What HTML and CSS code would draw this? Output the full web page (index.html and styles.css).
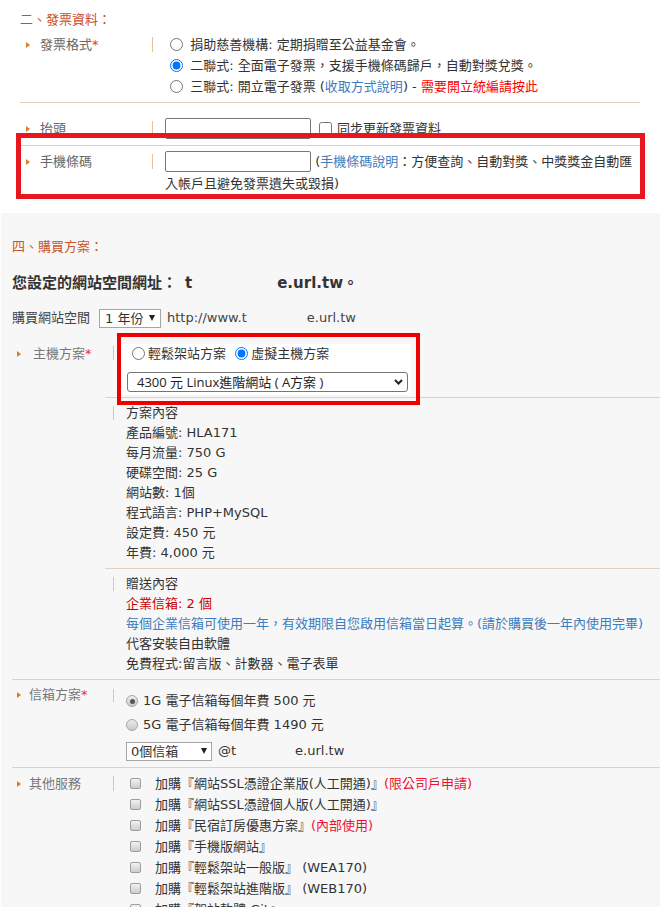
FILE: index.html
```html
<!DOCTYPE html>
<html lang="zh-Hant">
  <head>
    <meta charset="UTF-8" />
    <title>購買方案</title>
    <link rel="stylesheet" href="styles.css">
  </head>
  <body>
    <div class="invoice">
      <div class="sec-title">二、發票資料：</div>

      <div class="row row-format">
        <div class="label"><span class="tri"></span>發票格式<em class="req">*</em></div>
        <div class="bar"></div>
        <div class="field">
          <label class="opt"><input type="radio" name="inv"> 捐助慈善機構: 定期捐贈至公益基金會。</label>
          <label class="opt"><input type="radio" name="inv" checked> 二聯式: 全面電子發票，支援手機條碼歸戶，自動對獎兌獎。</label>
          <label class="opt"><input type="radio" name="inv"> 三聯式: 開立電子發票 (<a class="link">收取方式說明</a>) - <a class="warn">需要開立統編請按此</a></label>
        </div>
      </div>

      <div class="row row-title">
        <div class="label"><span class="tri"></span>抬頭</div>
        <div class="bar"></div>
        <div class="field field-title">
          <input class="text-input" type="text">
          <input class="sync" type="checkbox">
          <span>同步更新發票資料</span>
        </div>
      </div>

      <div class="row row-phone">
        <div class="label"><span class="tri"></span>手機條碼</div>
        <div class="bar"></div>
        <div class="field field-phone">
          <input class="text-input" type="text"> (<a class="link">手機條碼說明</a>：方便查詢、自動對獎、中獎獎金自動匯入帳戶且避免發票遺失或毀損)
        </div>
      </div>
    </div>

    <div class="plan">
      <div class="sec-title">四、購買方案：</div>

      <div class="site-url">您設定的網站空間網址：<span class="host">t<span class="blank blank-head"></span>e.url.tw</span>。</div>

      <div class="buy">
        購買網站空間
        <span class="old-select year">1 年份</span>
        <span class="www">http://www.t<span class="blank blank-buy"></span>e.url.tw</span>
      </div>

      <div class="row row-host">
        <div class="label label-host"><span class="tri"></span>主機方案<em class="req">*</em></div>
        <div class="subs">
          <div class="sub sub-pick">
            <div class="bar"></div>
            <div class="pick-box">
              <div class="pick-radios">
                <label><input type="radio" name="host">輕鬆架站方案</label>
                <label><input type="radio" name="host" checked>虛擬主機方案</label>
              </div>
              <div class="wide-select">
                <span>4300 元 Linux進階網站 ( A方案 )</span>
                <svg width="9" height="6" viewBox="0 0 9 6"><path d="M1 1l3.5 3.5L8 1" fill="none" stroke="#222" stroke-width="2"/></svg>
              </div>
            </div>
          </div>

          <div class="sub">
            <div class="bar"></div>
            <div class="content">
              <div>方案內容</div>
              <div>產品編號: HLA171</div>
              <div>每月流量: 750 G</div>
              <div>硬碟空間: 25 G</div>
              <div>網站數: 1個</div>
              <div>程式語言: PHP+MySQL</div>
              <div>設定費: 450 元</div>
              <div>年費: 4,000 元</div>
            </div>
          </div>

          <div class="sub">
            <div class="bar"></div>
            <div class="content">
              <div>贈送內容</div>
              <div class="red">企業信箱: 2 個</div>
              <div class="blue nowrap">每個企業信箱可使用一年，有效期限自您啟用信箱當日起算。(請於購買後一年內使用完畢)</div>
              <div>代客安裝自由軟體</div>
              <div>免費程式:留言版、計數器、電子表單</div>
            </div>
          </div>
        </div>
      </div>

      <div class="row row-mail">
        <div class="label"><span class="tri"></span>信箱方案<em class="req">*</em></div>
        <div class="bar"></div>
        <div class="content">
          <div class="mail-opt"><span class="g-radio on"></span>1G 電子信箱每個年費 500 元</div>
          <div class="mail-opt"><span class="g-radio"></span>5G 電子信箱每個年費 1490 元</div>
          <div class="mail-count">
            <span class="old-select count">0個信箱</span>
            <span class="at">@t<span class="blank blank-mail"></span>e.url.tw</span>
          </div>
        </div>
      </div>

      <div class="row row-other">
        <div class="label"><span class="tri"></span>其他服務</div>
        <div class="bar"></div>
        <div class="content">
          <div class="svc"><span class="g-check"></span>加購『網站SSL憑證企業版(人工開通)』<span class="pink">(限公司戶申請)</span></div>
          <div class="svc"><span class="g-check"></span>加購『網站SSL憑證個人版(人工開通)』</div>
          <div class="svc"><span class="g-check"></span>加購『民宿訂房優惠方案』<span class="pink">(內部使用)</span></div>
          <div class="svc"><span class="g-check"></span>加購『手機版網站』</div>
          <div class="svc"><span class="g-check"></span>加購『輕鬆架站一般版』 (WEA170)</div>
          <div class="svc"><span class="g-check"></span>加購『輕鬆架站進階版』 (WEB170)</div>
          <div class="svc"><span class="g-check"></span>加購『架站軟體 Git』</div>
        </div>
      </div>
    </div>

    <div class="mark mark-phone"></div>
    <div class="mark mark-host"></div>
  </body>
</html>
```

FILE: styles.css
```css
body {
  margin: 0;
  position: relative;
  background: #fff;
  color: #333;
  font-family: "DejaVu Sans", "Noto Sans CJK TC", sans-serif;
  font-size: 13px;
  line-height: 20px;
}

.sec-title {
  color: #cc4b1f;
  line-height: 20px;
}

.row {
  display: flex;
  align-items: flex-start;
}

.label {
  display: flex;
  align-items: center;
  flex: none;
  color: #666;
}

.tri {
  width: 0;
  height: 0;
  border-left: 4px solid #e07b22;
  border-top: 3.5px solid transparent;
  border-bottom: 3.5px solid transparent;
}

.req {
  font-style: normal;
  color: #e8332a;
}

.bar {
  flex: none;
  width: 1px;
  height: 15px;
  margin-top: 3px;
  background: #e2c39a;
}

.link {
  color: #3f7cbc;
}

.warn {
  color: #ff0000;
}

/* invoice block */

.invoice {
  padding: 10px 20px 18px;
}

.invoice .row {
  border-bottom: 1px solid #dfd0c2;
}

.invoice .row:last-child {
  border-bottom: 0;
}

.invoice .label {
  width: 132px;
  line-height: 21px;
}

.invoice .tri {
  margin: 0 10px 0 6px;
}

.invoice .field {
  flex: 1;
  margin-left: 12px;
  line-height: 21px;
}

.row-format {
  padding: 4px 0 5px;
}

.row-title {
  padding: 15px 0 6px;
}

.row-phone {
  padding: 5px 0 0;
}

.opt {
  display: block;
}

.opt input {
  width: 13px;
  height: 13px;
  margin: 0 3px 0 5px;
  vertical-align: -2px;
}

.text-input {
  box-sizing: border-box;
  width: 146px;
  height: 21px;
  margin: 0;
  padding: 1px 3px;
  border: 1px solid #767676;
  border-radius: 2px;
  background: #fff;
  font: inherit;
}

.field-title {
  display: flex;
  align-items: center;
}

.sync {
  width: 13px;
  height: 13px;
  margin: 0 5px 0 8px;
}

.field-phone {
  line-height: 22px !important;
}

.field-phone .text-input {
  vertical-align: top;
}

/* plan block */

.plan {
  margin-left: 1px;
  padding: 24px 0 40px 11px;
  background: #f7f7f7;
}

.plan .sec-title {
  color: #c8552a;
}

.site-url {
  margin-top: 16px;
  font-size: 15px;
  font-weight: bold;
  line-height: 20px;
}

.host {
  margin-left: 8px;
}

.blank {
  display: inline-block;
}

.blank-head {
  width: 85px;
}

.blank-buy {
  width: 60px;
}

.blank-mail {
  width: 59px;
}

.buy {
  display: flex;
  align-items: center;
  height: 20px;
  margin-top: 15px;
  color: #444;
}

.old-select {
  display: inline-flex;
  align-items: center;
  justify-content: space-between;
  box-sizing: border-box;
  height: 19px;
  border: 1px solid #a6a6a6;
  background: #fff;
  color: #333;
  line-height: 17px;
}

.old-select::after {
  content: "";
  border-top: 6px solid #222;
  border-left: 3.5px solid transparent;
  border-right: 3.5px solid transparent;
}

.year {
  width: 62px;
  margin-left: 9px;
  padding: 0 5px 0 5px;
}

.www {
  margin-left: 6px;
}

.plan .label {
  width: 93px;
  padding-top: 5px;
  line-height: 20px;
  color: #777;
}

.plan .tri {
  margin: 0 8px 0 5px;
}

.label-host .tri {
  margin-right: 12px;
}

.row-host {
  margin-top: 11px;
  border-bottom: 1px solid #dfd0c2;
}

.subs {
  flex: 1;
}

.sub {
  display: flex;
  align-items: flex-start;
  padding: 5px 0;
  border-bottom: 1px solid #dfd0c2;
}

.sub:last-child {
  border-bottom: 0;
}

.plan .bar {
  height: 14px;
  margin-left: 8px;
}

.sub-pick {
  padding: 5px 0 2px;
}

.sub-pick .bar {
  margin-top: 2px;
}

.pick-box {
  width: 281px;
  margin-left: 7px;
  padding: 0 3px 3px 6px;
  background: #fff;
}

.pick-radios {
  line-height: 20px;
}

.pick-radios input {
  width: 13px;
  height: 13px;
  margin: 0 3px 0 5px;
  vertical-align: -2px;
}

.wide-select {
  display: flex;
  align-items: center;
  justify-content: space-between;
  box-sizing: border-box;
  height: 20px;
  margin-top: 8px;
  padding: 0 4px 0 9px;
  border: 1px solid #767676;
  border-radius: 3px;
  background: #fff;
  font-family: "Open Sans", "Noto Sans CJK TC", sans-serif;
  line-height: 18px;
  color: #222;
}

.content {
  flex: 1;
  margin-left: 12px;
  line-height: 20px;
}

.red {
  color: #cc0000;
}

.blue {
  color: #3d7cbf;
}

.pink {
  color: #ee1133;
}

.nowrap {
  white-space: nowrap;
}

.row-mail {
  border-bottom: 1px solid #dfd0c2;
}

.row-mail .bar {
  height: 13px;
  margin-top: 9px;
}

.row-mail .content {
  padding: 9px 0 6px;
}

.mail-opt {
  display: flex;
  align-items: center;
  height: 24px;
}

.g-radio {
  position: relative;
  box-sizing: border-box;
  width: 12px;
  height: 12px;
  margin-right: 5px;
  border: 1px solid #a8a8a8;
  border-radius: 50%;
  background: linear-gradient(#ececec, #c9c9c9);
}

.g-radio.on::after {
  content: "";
  position: absolute;
  left: 2.5px;
  top: 2.5px;
  width: 5px;
  height: 5px;
  border-radius: 50%;
  background: #555;
}

.mail-count {
  display: flex;
  align-items: center;
  margin-top: 4px;
}

.count {
  width: 86px;
  padding: 0 4px 0 4px;
}

.at {
  margin-left: 6px;
}

.row-other .label {
  line-height: 21px;
}

.row-other .bar {
  height: 15px;
  margin-top: 8px;
}

.row-other .content {
  padding-top: 5px;
}

.svc {
  display: flex;
  align-items: center;
  height: 21px;
}

.g-check {
  box-sizing: border-box;
  width: 11px;
  height: 11px;
  margin: 0 14px 0 4px;
  border: 1px solid #9d9d9d;
  border-radius: 2px;
  background: linear-gradient(#f2f2f2, #cdcdcd);
}

/* annotation boxes */

.mark {
  position: absolute;
  box-sizing: border-box;
  pointer-events: none;
}

.mark-phone {
  left: 16px;
  top: 133px;
  width: 629px;
  height: 66px;
  border: 5px solid #e8161f;
}

.mark-host {
  left: 117px;
  top: 333px;
  width: 303px;
  height: 72px;
  border: 4px solid #ee0000;
}
```
